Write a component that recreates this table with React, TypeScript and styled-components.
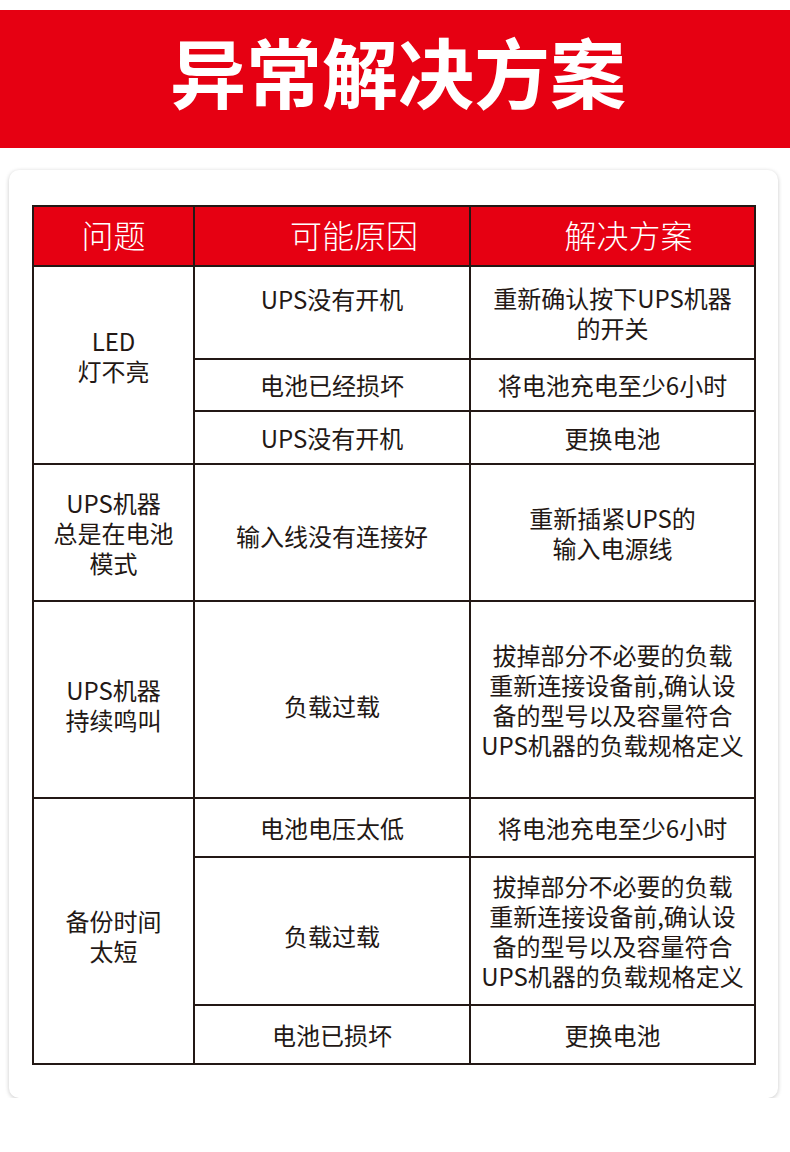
import React from 'react';
import styled, { createGlobalStyle } from 'styled-components';

const GlobalStyle = createGlobalStyle`
  body {
    margin: 0;
    background: #ffffff;
    font-family: "Noto Sans CJK SC", "Noto Sans", sans-serif;
  }
`;

interface SubRow {
  cause: string[];
  fix: string[];
  height: number;
  causeTop?: boolean;
  causeShift?: number;
}

interface Group {
  problem: string[];
  shift: number;
  rows: SubRow[];
}

const overload = ['拔掉部分不必要的负载', '重新连接设备前,确认设', '备的型号以及容量符合', 'UPS机器的负载规格定义'];

const groups: Group[] = [
  {
    problem: ['LED', '灯不亮'],
    shift: -9,
    rows: [
      { cause: ['UPS没有开机'], fix: ['重新确认按下UPS机器', '的开关'], height: 93, causeTop: true },
      { cause: ['电池已经损坏'], fix: ['将电池充电至少6小时'], height: 52 },
      { cause: ['UPS没有开机'], fix: ['更换电池'], height: 53 },
    ],
  },
  {
    problem: ['UPS机器', '总是在电池', '模式'],
    shift: 0,
    rows: [{ cause: ['输入线没有连接好'], fix: ['重新插紧UPS的', '输入电源线'], height: 137, causeShift: 3 }],
  },
  {
    problem: ['UPS机器', '持续鸣叫'],
    shift: 5,
    rows: [{ cause: ['负载过载'], fix: overload, height: 197, causeShift: 6 }],
  },
  {
    problem: ['备份时间', '太短'],
    shift: 5,
    rows: [
      { cause: ['电池电压太低'], fix: ['将电池充电至少6小时'], height: 59 },
      { cause: ['负载过载'], fix: overload, height: 148, causeShift: 5 },
      { cause: ['电池已损坏'], fix: ['更换电池'], height: 59 },
    ],
  },
];

const Banner = styled.header`
  margin-top: 10px;
  height: 138px;
  background: #e60012;
  display: flex;
  align-items: center;
  justify-content: center;
`;

const Title = styled.h1`
  margin: 0 0 18px 6px;
  color: #ffffff;
  font-size: 76px;
  font-weight: 700;
  line-height: 1;
`;

const Card = styled.section`
  margin: 22px 12px 0 9px;
  padding: 35px 23px 33px 23px;
  background: #ffffff;
  border-radius: 10px;
  box-shadow: 0 1px 4px rgba(0, 0, 0, 0.22);
`;

const Table = styled.table`
  width: 722px;
  border-collapse: collapse;
  table-layout: fixed;
  color: #231815;
`;

const HeadRow = styled.tr`
  height: 60px;
`;

const HeadCell = styled.th<{ $shift: number }>`
  padding: 0 0 4px ${(p) => p.$shift}px;
  background: #e60012;
  color: #ffffff;
  font-size: 32px;
  line-height: 40px;
  font-weight: 300;
  border: 2px solid #231815;
  text-align: center;
`;

// $top: hang the text from the top edge; $shift: nudge a centred text down (+) or up (-)
const Cell = styled.td<{ $top?: boolean; $shift?: number }>`
  padding: ${(p) =>
    p.$top
      ? '17px 4px 0'
      : `${Math.max(p.$shift ?? 0, 0) * 2}px 4px ${Math.max(-(p.$shift ?? 0), 0) * 2}px`};
  border: 2px solid #231815;
  text-align: center;
  vertical-align: ${(p) => (p.$top ? 'top' : 'middle')};
  font-size: 24px;
  line-height: 30px;
  font-weight: 400;
`;

const Line = styled.div`
  white-space: nowrap;
`;

const Lines = ({ lines }: { lines: string[] }) => (
  <>
    {lines.map((l, i) => (
      <Line key={i}>{l}</Line>
    ))}
  </>
);

export default function App() {
  return (
    <>
      <GlobalStyle />
      <Banner>
        <Title>异常解决方案</Title>
      </Banner>
      <Card>
        <Table>
          <colgroup>
            <col style={{ width: 161 }} />
            <col style={{ width: 276 }} />
            <col style={{ width: 285 }} />
          </colgroup>
          <thead>
            <HeadRow>
              <HeadCell $shift={0}>问题</HeadCell>
              <HeadCell $shift={44}>可能原因</HeadCell>
              <HeadCell $shift={32}>解决方案</HeadCell>
            </HeadRow>
          </thead>
          <tbody>
            {groups.map((g, gi) =>
              g.rows.map((r, ri) => (
                <tr key={`${gi}-${ri}`} style={{ height: r.height }}>
                  {ri === 0 && (
                    <Cell rowSpan={g.rows.length} $shift={g.shift}>
                      <Lines lines={g.problem} />
                    </Cell>
                  )}
                  <Cell $top={r.causeTop} $shift={r.causeShift}>
                    <Lines lines={r.cause} />
                  </Cell>
                  <Cell>
                    <Lines lines={r.fix} />
                  </Cell>
                </tr>
              ))
            )}
          </tbody>
        </Table>
      </Card>
    </>
  );
}
